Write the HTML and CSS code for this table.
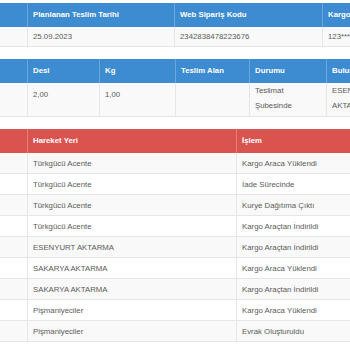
FILE: index.html
```html
<!DOCTYPE html>
<html lang="tr">
<head>
<meta charset="utf-8">
<link rel="stylesheet" href="styles.css">
</head>
<body>
<div class="page">
  <table class="grid blue t1">
    <colgroup><col class="c28"><col class="w147"><col class="w148"><col class="w160"></colgroup>
    <thead><tr><th></th><th>Planlanan Teslim Tarihi</th><th>Web Sipariş Kodu</th><th>Kargo Takip No</th></tr></thead>
    <tbody><tr class="odd"><td></td><td>25.09.2023</td><td>2342838478223676</td><td>123*******</td></tr></tbody>
  </table>

  <table class="grid blue t2">
    <colgroup><col class="c28"><col class="w72"><col class="w76"><col class="w74"><col class="w77"><col class="w76"></colgroup>
    <thead><tr><th></th><th>Desi</th><th>Kg</th><th>Teslim Alan</th><th>Durumu</th><th>Bulunduğu Şube</th></tr></thead>
    <tbody><tr class="odd"><td></td><td>2,00</td><td>1,00</td><td></td><td class="wrap">Teslimat Şubesinde</td><td class="wrap">ESENYURT AKTARMA</td></tr></tbody>
  </table>

  <table class="grid red t3">
    <colgroup><col class="c28"><col class="w209"><col class="w200"></colgroup>
    <thead><tr><th></th><th>Hareket Yeri</th><th>İşlem</th></tr></thead>
    <tbody>
      <tr class="odd"><td></td><td>Türkgücü Acente</td><td>Kargo Araca Yüklendi</td></tr>
      <tr><td></td><td>Türkgücü Acente</td><td>İade Sürecinde</td></tr>
      <tr class="odd"><td></td><td>Türkgücü Acente</td><td>Kurye Dağıtıma Çıktı</td></tr>
      <tr><td></td><td>Türkgücü Acente</td><td>Kargo Araçtan İndirildi</td></tr>
      <tr class="odd"><td></td><td>ESENYURT AKTARMA</td><td>Kargo Araçtan İndirildi</td></tr>
      <tr><td></td><td>SAKARYA AKTARMA</td><td>Kargo Araca Yüklendi</td></tr>
      <tr class="odd"><td></td><td>SAKARYA AKTARMA</td><td>Kargo Araçtan İndirildi</td></tr>
      <tr><td></td><td>Pişmaniyeciler</td><td>Kargo Araca Yüklendi</td></tr>
      <tr class="odd"><td></td><td>Pişmaniyeciler</td><td>Evrak Oluşturuldu</td></tr>
    </tbody>
  </table>
</div>
</body>
</html>
```

FILE: styles.css
```css
html, body {
  margin: 0;
  padding: 0;
  background: #ffffff;
}
.page {
  width: 350px;
  height: 350px;
  overflow: hidden;
  padding-top: 3px;
  box-sizing: border-box;
  font-family: "Liberation Sans", Arial, sans-serif;
  font-size: 7.8px;
  color: #5a5a5a;
}
.grid {
  border-collapse: separate;
  border-spacing: 0;
  table-layout: fixed;
  margin-bottom: 12px;
}
.t1 { width: 483px; }
.t2 { width: 403px; }
.t3 { width: 437px; }
.c28 { width: 28px; }
.w72 { width: 72px; }
.w74 { width: 74px; }
.w76 { width: 76px; }
.w77 { width: 77px; }
.w147 { width: 147px; }
.w148 { width: 148px; }
.w160 { width: 160px; }
.w200 { width: 200px; }
.w209 { width: 209px; }

.grid th {
  text-align: left;
  font-weight: bold;
  color: #ffffff;
  height: 24px;
  padding: 0 4px 0 5px;
  line-height: 14px;
  box-sizing: border-box;
  white-space: nowrap;
  overflow: hidden;
  vertical-align: middle;
}
.grid td {
  box-sizing: border-box;
  padding: 0 4px 0 5px;
  border-right: 1px solid #e6e6e6;
  border-bottom: 1px solid #e6e6e6;
  white-space: nowrap;
  overflow: hidden;
  vertical-align: middle;
}
.grid tr.odd td { background: #f9f9f9; }

.blue th {
  background: #3d8bd0;
  border-right: 1px solid #6aa6dc;
}
.red th {
  background: #d9534f;
  border-right: 1px solid #e6807d;
}

.t1 td {
  height: 20px;
  line-height: 13px;
}
.t2 td {
  height: 34px;
  line-height: 15px;
  vertical-align: top;
  padding-top: 4px;
}
.t2 td.wrap {
  white-space: normal;
  padding-top: 0;
}
.t3 td {
  height: 21px;
  line-height: 13px;
}
```
